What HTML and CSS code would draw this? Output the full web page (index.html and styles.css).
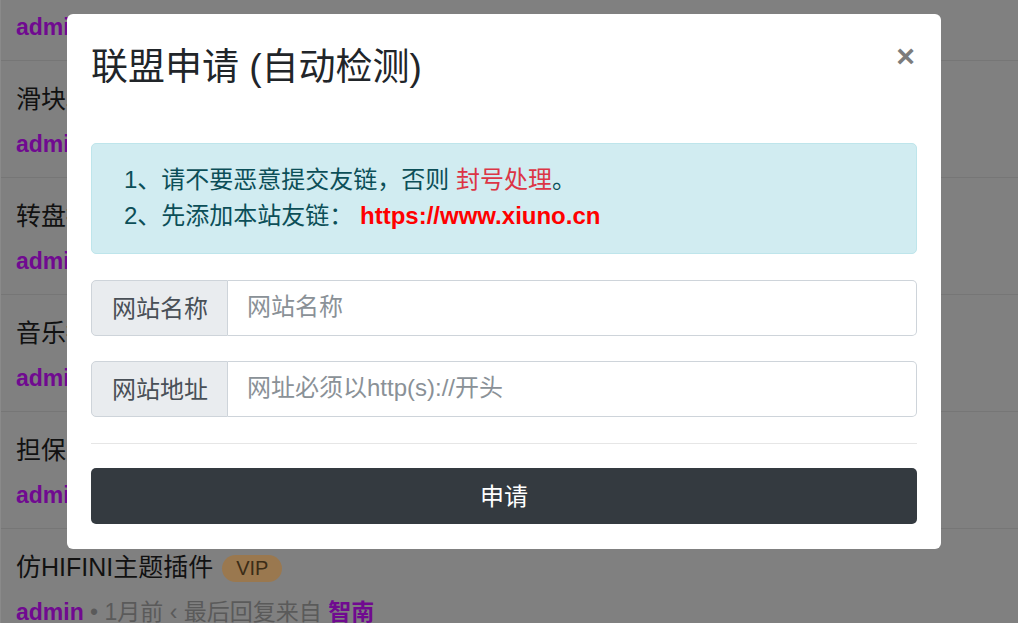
FILE: index.html
```html
<!DOCTYPE html>
<html lang="zh-CN">
<head>
  <meta charset="UTF-8">
  <title>联盟申请</title>
  <link rel="stylesheet" href="styles.css">
</head>
<body>
  <!-- 帖子列表 (被遮罩层盖住) -->
  <ul class="thread-list">
    <li class="thread">
      <div class="thread-title">幻灯片轮播插件</div>
      <div class="thread-meta"><span class="author">admin</span> • 1月前 ‹ 最后回复来自 <span class="author">智南</span></div>
    </li>
    <li class="thread">
      <div class="thread-title">滑块验证插件</div>
      <div class="thread-meta"><span class="author">admin</span> • 1月前</div>
    </li>
    <li class="thread">
      <div class="thread-title">转盘抽奖插件</div>
      <div class="thread-meta"><span class="author">admin</span> • 1月前</div>
    </li>
    <li class="thread">
      <div class="thread-title">音乐播放器插件</div>
      <div class="thread-meta"><span class="author">admin</span> • 1月前</div>
    </li>
    <li class="thread">
      <div class="thread-title">担保交易插件</div>
      <div class="thread-meta"><span class="author">admin</span> • 1月前</div>
    </li>
    <li class="thread">
      <div class="thread-title">仿HIFINI主题插件 <span class="badge-vip">VIP</span></div>
      <div class="thread-meta"><span class="author">admin</span> • 1月前 ‹ 最后回复来自 <span class="author">智南</span></div>
    </li>
  </ul>

  <!-- 联盟申请弹窗 -->
  <div class="modal">
    <div class="modal-dialog">
      <div class="modal-header">
        <h3 class="modal-title">联盟申请 (自动检测)</h3>
        <button type="button" class="close">×</button>
      </div>
      <div class="modal-body">
        <div class="alert-info">
          <p>1、请不要恶意提交友链，否则 <span class="text-danger">封号处理</span>。</p>
          <p>2、先添加本站友链： <b class="site-url">https://www.xiuno.cn</b></p>
        </div>
        <form id="linkForm">
          <div class="input-group">
            <span class="input-label">网站名称</span>
            <input type="text" class="form-control" placeholder="网站名称">
          </div>
          <div class="input-group">
            <span class="input-label">网站地址</span>
            <input type="text" class="form-control" placeholder="网址必须以http(s)://开头">
          </div>
          <hr>
          <button type="submit" class="btn-submit">申请</button>
        </form>
      </div>
    </div>
  </div>
</body>
</html>
```

FILE: styles.css
```css
/* Reset */
* {
  margin: 0;
  padding: 0;
  box-sizing: border-box;
}
body {
  font-family: "Liberation Sans", Arial, "Noto Sans CJK SC", sans-serif;
  background-color: #808080;
  overflow: hidden;
  height: 623px;
}

/* 列表 (已变暗) */
.thread-list {
  list-style: none;
  margin-top: -56px;
  border-left: 1px solid #8a8a8a;
}
.thread {
  padding: 22px 16px 18px 15px;
  border-bottom: 1px solid #767676;
}
.thread-title {
  font-size: 25px;
  line-height: 32px;
  color: #111;
  white-space: nowrap;
}
.thread-meta {
  margin-top: 14px;
  font-size: 23px;
  line-height: 30px;
  color: #5a5a5a;
  white-space: nowrap;
}
.author {
  color: #700a90;
  font-weight: bold;
}
.badge-vip {
  display: inline-block;
  vertical-align: 1px;
  margin-left: 2px;
  padding: 0 14px;
  height: 27px;
  line-height: 27px;
  border-radius: 14px;
  background-color: #9a784f;
  color: #3b2c17;
  font-size: 20px;
}

/* 弹窗 */
.modal {
  position: fixed;
  top: 0;
  left: 0;
  right: 0;
  bottom: 0;
  padding: 14px 0 0 67px;
}
.modal-dialog {
  width: 874px;
  background: #fff;
  border-radius: 6px;
}
.modal-header {
  display: flex;
  justify-content: space-between;
  align-items: flex-start;
  padding: 34px 24px 0 24px;
}
.modal-title {
  font-size: 37px;
  line-height: 40px;
  font-weight: normal;
  color: #212529;
}
.close {
  margin-top: -8px;
  margin-right: 2px;
  border: 0;
  background: none;
  font-family: "Liberation Sans", Arial, sans-serif;
  font-size: 32px;
  font-weight: bold;
  line-height: 32px;
  color: #7c7c7c;
  cursor: pointer;
}
.modal-body {
  padding: 55px 24px 25px;
}
.alert-info {
  padding: 18px 25px 19px 32px;
  margin-bottom: 26px;
  background-color: #d1ecf1;
  border: 1px solid #bee5eb;
  border-radius: 5px;
  color: #0c4f58;
  font-size: 24px;
  line-height: 36px;
}
.text-danger {
  color: #dc3545;
}
.site-url {
  color: #ff0000;
}
.input-group {
  display: flex;
  height: 56px;
  margin-bottom: 25px;
}
.input-label {
  display: flex;
  align-items: center;
  padding: 0 19px 4px 20px;
  background-color: #e9ecef;
  border: 1px solid #ced4da;
  border-radius: 5px 0 0 5px;
  color: #495057;
  font-size: 24px;
}
.form-control {
  flex: 1;
  padding: 0 19px 2px;
  border: 1px solid #ced4da;
  border-left: 0;
  border-radius: 0 5px 5px 0;
  font-family: inherit;
  font-size: 24px;
  color: #495057;
}
.form-control::placeholder {
  color: #8a9197;
}
hr {
  border: 0;
  border-top: 1px solid #e6e6e6;
  margin: 26px 0 24px;
}
.btn-submit {
  display: block;
  width: 100%;
  height: 56px;
  padding-bottom: 4px;
  border: 0;
  border-radius: 5px;
  background-color: #343a40;
  color: #fff;
  font-family: inherit;
  font-size: 24px;
  cursor: pointer;
}
```
